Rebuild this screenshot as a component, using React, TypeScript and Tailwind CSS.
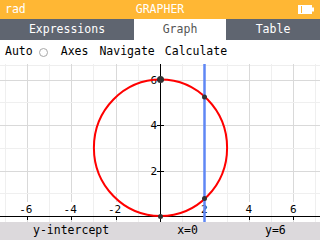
import React from 'react';

const SX = 22.2;
const SY = 22.75;
const OX = 160;
const OY = 152;

const px = (x: number) => OX + x * SX;
const py = (y: number) => OY - y * SY;
// snap to pixel centre so 1px lines stay crisp
const crisp = (v: number) => Math.round(v) + 0.5;

const Battery: React.FC = () => (
  <svg width="17" height="9" viewBox="0 0 17 9">
    <rect x="0.5" y="0.5" width="13" height="8" fill="#fff" stroke="#fff" />
    <rect x="3" y="1" width="1" height="7" fill="#ffb734" />
    <rect x="14" y="2.5" width="2" height="4" fill="#fff" />
  </svg>
);

const Graph: React.FC = () => {
  const vLines = [];
  for (let k = -7; k <= 7; k++) vLines.push(k);
  const hLines = [1, 2, 3, 4, 5, 6];
  const xLabels = [-6, -4, -2, 2, 4, 6];
  const yLabels = [2, 4, 6];

  return (
    <svg width="320" height="158" viewBox="0 0 320 158" className="block">
      <rect x="0" y="0" width="320" height="158" fill="#fff" />
      <line x1="0" y1="1.5" x2="320" y2="1.5" stroke="#eeeeee" />
      {vLines.map((k) => (
        <line
          key={'v' + k}
          x1={crisp(px(k))}
          y1="0"
          x2={crisp(px(k))}
          y2="158"
          stroke={k % 2 === 0 ? '#d9d9d9' : '#efefef'}
          strokeWidth="1"
        />
      ))}
      {hLines.map((k) => (
        <line
          key={'h' + k}
          x1="0"
          y1={crisp(py(k))}
          x2="320"
          y2={crisp(py(k))}
          stroke={k % 2 === 0 ? '#d9d9d9' : '#efefef'}
          strokeWidth="1"
        />
      ))}

      {/* axes */}
      <line x1="0" y1={OY + 0.5} x2="320" y2={OY + 0.5} stroke="#000" strokeWidth="1" />
      <line x1={OX + 0.5} y1="0" x2={OX + 0.5} y2="158" stroke="#000" strokeWidth="1" />

      {/* x ticks + labels */}
      {xLabels.map((k) => (
        <g key={'xl' + k}>
          <line x1={crisp(px(k))} y1={OY - 3} x2={crisp(px(k))} y2={OY + 4} stroke="#000" />
          <rect x={px(k) - (k < 0 ? 8 : 5)} y={OY - 14} width={k < 0 ? 15 : 10} height="14" fill="#fff" />
          <text
            x={px(k) + (k < 0 ? -1 : 0)}
            y={OY - 3}
            textAnchor="middle"
            fontFamily="'DejaVu Sans Mono', monospace"
            fontSize="11"
            fill="#000"
          >
            {k < 0 ? '-' + Math.abs(k) : k}
          </text>
        </g>
      ))}

      {/* y ticks + labels */}
      {yLabels.map((k) => (
        <g key={'yl' + k}>
          <line x1={OX - 3} y1={crisp(py(k))} x2={OX + 4} y2={crisp(py(k))} stroke="#000" />
          <text
            x={OX - 3}
            y={py(k) + 4}
            textAnchor="end"
            fontFamily="'DejaVu Sans Mono', monospace"
            fontSize="11"
            fill="#000"
          >
            {k}
          </text>
        </g>
      ))}

      {/* curve */}
      <ellipse cx={OX + 0.5} cy={py(3)} rx={3 * SX} ry={3 * SY} fill="none" stroke="#ff0000" strokeWidth="2" />

      {/* x = 2 */}
      <line x1={crisp(px(2))} y1="0" x2={crisp(px(2))} y2="158" stroke="#5f87f5" strokeWidth="2.5" />

      {/* points */}
      <circle cx={OX + 0.5} cy={py(6)} r="3.5" fill="#333" />
      <circle cx={crisp(px(2))} cy={py(3 + Math.sqrt(5))} r="2.5" fill="#333" />
      <circle cx={crisp(px(2))} cy={py(3 - Math.sqrt(5))} r="2.5" fill="#333" />
      <circle cx={OX + 0.5} cy={OY + 0.5} r="2.5" fill="#333" />
    </svg>
  );
};

const App: React.FC = () => {
  return (
    <div
      className="w-[320px] h-[240px] flex flex-col bg-white overflow-hidden"
      style={{ fontFamily: "'DejaVu Sans Mono', 'Liberation Mono', monospace" }}
    >
      {/* header */}
      <div className="h-[19px] bg-[#ffb734] flex items-center justify-between px-[5px] text-white text-[11.5px] relative">
        <span>rad</span>
        <span className="absolute left-0 right-0 text-center">GRAPHER</span>
        <Battery />
      </div>

      {/* tabs */}
      <div className="h-[21px] flex text-[11.5px]">
        <div className="w-[134px] bg-[#5f6570] text-white flex items-center justify-center">Expressions</div>
        <div className="w-[92px] bg-white text-[#555] flex items-center justify-center">Graph</div>
        <div className="flex-1 bg-[#5f6570] text-white flex items-center justify-center">Table</div>
      </div>

      {/* toolbar */}
      <div className="h-[24px] flex items-center pl-[5px] text-[11.5px] text-black">
        <span>Auto</span>
        <span className="ml-[6px] w-[9px] h-[9px] rounded-full border border-[#a8a8a8]" />
        <span className="ml-[13px]">Axes</span>
        <span className="ml-[11px]">Navigate</span>
        <span className="ml-[10px]">Calculate</span>
      </div>

      {/* graph */}
      <div className="h-[158px]">
        <Graph />
      </div>

      {/* bottom bar */}
      <div className="h-[18px] bg-[#dcd9dc] flex items-center text-[11.5px] text-black">
        <span className="ml-[33px]">y-intercept</span>
        <span className="ml-[68px]">x=0</span>
        <span className="ml-[67px]">y=6</span>
      </div>
    </div>
  );
};

export default App;
